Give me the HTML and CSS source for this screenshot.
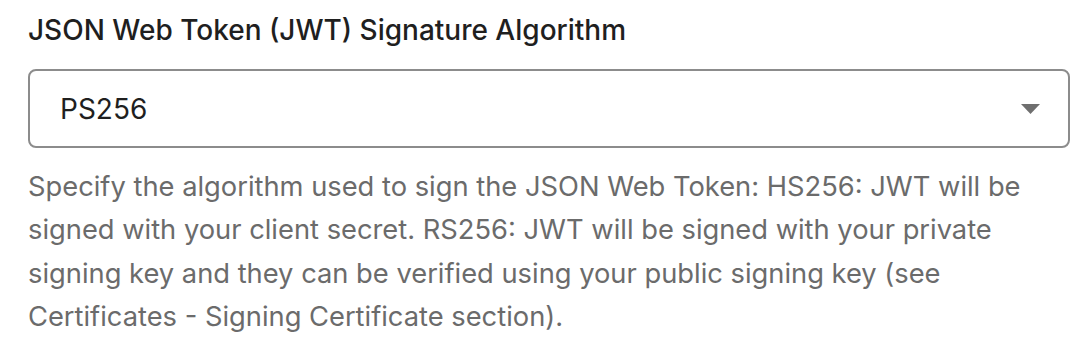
FILE: index.html
```html
<!DOCTYPE html>
<html>
  <head>
    <meta charset="utf-8">
    <title>JWT Signature Algorithm</title>
    <link rel="stylesheet" href="styles.css">
  </head>
  <body>
    <div class="field">
      <label class="field-label" for="jwt-alg">JSON Web Token (JWT) Signature Algorithm</label>
      <div class="select-wrapper">
        <div class="select" id="jwt-alg">
          <span class="select-value">PS256</span>
          <svg class="select-caret" width="19" height="10" viewBox="0 0 19 10">
            <path d="M0 0 L19 0 L9.5 10 Z" fill="#6f6f6f"/>
          </svg>
        </div>
      </div>
      <p class="field-help">Specify the algorithm used to sign the JSON Web Token: HS256: JWT will be signed with your client secret. RS256: JWT will be signed with your private signing key and they can be verified using your public signing key (see Certificates - Signing Certificate section).</p>
    </div>
  </body>
</html>
```

FILE: styles.css
```css
* {
  margin: 0;
  box-sizing: border-box;
}
body {
  font-family: Inter, "Noto Sans", sans-serif;
  background: #ffffff;
  color: #1f1f1f;
}
.field {
  width: 1042px;
  padding-top: 10px;
  margin-left: 28px;
}
.field-label {
  display: block;
  font-size: 28px;
  font-weight: 500;
  line-height: 40px;
  color: #1f1f1f;
  margin-bottom: 19px;
}
.select {
  height: 79px;
  border: 2px solid #8c8c8c;
  border-radius: 8px;
  display: flex;
  align-items: center;
  justify-content: space-between;
  padding: 0 28px 0 30px;
}
.select-value {
  font-size: 28px;
  color: #1f1f1f;
}
.select-caret {
  display: block;
}
.field-help {
  margin-top: 17px;
  font-size: 27.3px;
  line-height: 43.3px;
  color: #6b6b6b;
}
```
